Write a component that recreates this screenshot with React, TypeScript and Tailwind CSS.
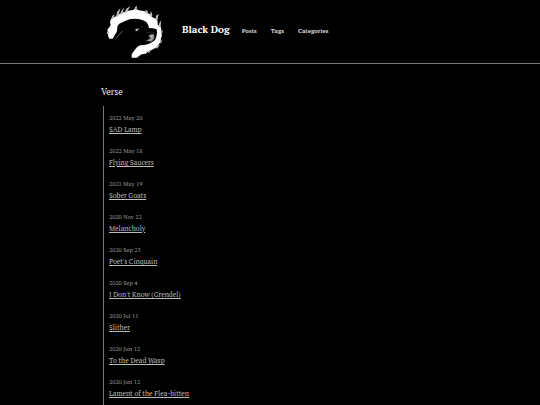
interface Post {
  date: string;
  title: string;
}

const navItems = ["Posts", "Tags", "Categories"];

const posts: Post[] = [
  { date: "2022 May 20", title: "SAD Lamp" },
  { date: "2022 May 18", title: "Flying Saucers" },
  { date: "2021 May 19", title: "Sober Goats" },
  { date: "2020 Nov 22", title: "Melancholy" },
  { date: "2020 Sep 25", title: "Poet's Cinquain" },
  { date: "2020 Sep 4", title: "I Don't Know (Grendel)" },
  { date: "2020 Jul 11", title: "Slither" },
  { date: "2020 Jun 12", title: "To the Dead Wasp" },
  { date: "2020 Jun 12", title: "Lament of the Flea-bitten" },
];

function DogLogo() {
  return (
    <svg viewBox="0 0 180 171" className="h-[57px] w-[60px]" aria-hidden="true">
      {/* burning mane around the head */}
      <path
        fill="#fff"
        d="M13 107 L9 98 L10 88 L7 80 L13 73 L17 66 L15 58 L18 47 L29 42 L37 37 L48 31 L58 27 L70 23 L84 21 L90 17 L98 20 L108 23 L118 24 L126 29 L135 34 L140 41 L147 45 L155 48 L158 58 L158 66 L166 69 L169 77 L168 88 L171 97 L168 106 L166 117 L159 128 L150 136 L140 141 L130 145 L122 152 L110 154 L103 158 L96 164 L80 164 L80 154 L89 141 L97 131 L106 127 L118 126 L130 123 L141 118 L150 111 L154 101 L156 90 L155 79 L143 76 L132 75 L130 67 L124 57 L114 52 L104 49 L92 47 L76 48 L62 53 L52 58 L43 62 L38 68 L36 78 L36 85 L30 95 L23 107 Z"
      />
      {/* loose flames */}
      <path
        fill="#bbb"
        d="M18 50 L22 38 L29 34 L26 46 Z M33 42 L36 28 L46 15 L43 29 L40 40 Z M44 36 L49 24 L57 13 L54 27 L50 35 Z M58 30 L64 17 L76 9 L70 20 L66 28 Z M88 21 L90 12 L96 8 L95 22 Z M121 29 L122 19 L129 27 L130 35 Z M134 37 L138 25 L142 34 L141 43 Z M151 50 L153 38 L161 33 L158 47 L157 56 Z M160 70 L163 59 L169 52 L167 66 L168 76 Z M166 86 L173 80 L171 94 Z M164 116 L172 109 L168 122 Z M150 133 L165 125 L156 137 Z M126 145 L140 139 L132 150 Z M8 82 L5 91 L10 95 Z"
      />
      <path fill="none" stroke="#999" strokeWidth="2" d="M34 104 L42 96 L53 84" />
      {/* eye */}
      <path fill="#ccc" d="M90 81 L94 77 L97 78 L102 75 L99 82 L94 84 Z" />
      <path fill="none" stroke="#555" strokeWidth="1" d="M88 87 L101 86 M106 71 L114 74" />
      {/* jaw */}
      <path fill="#777" d="M130 98 L137 94 L146 92 L149 101 L146 110 L139 116 L128 114 L117 116 L130 110 L135 104 Z" />
      <path fill="none" stroke="#ddd" strokeWidth="2" d="M134 101 L142 97 L139 104 L146 100 M129 111 L137 112 L144 106" />
      <path fill="none" stroke="#555" strokeWidth="1" d="M122 87 L135 89 L149 88" />
    </svg>
  );
}

function Header() {
  return (
    <header className="border-b border-[#777]">
      <div className="mx-auto flex max-w-[338px] items-center px-1 py-[3px]">
        <a href="#" aria-label="Home">
          <DogLogo />
        </a>
        <div className="ml-[17px] flex items-baseline pb-[2px]">
          <a href="#" className="text-[10px] leading-4 font-bold text-white">
            Black Dog
          </a>
          <nav className="ml-3 flex gap-[14px]">
            {navItems.map((item) => (
              <a key={item} href="#" className="text-[6px] leading-4 font-bold text-[#ddd]">
                {item}
              </a>
            ))}
          </nav>
        </div>
      </div>
    </header>
  );
}

export default function App() {
  return (
    <div className="h-screen overflow-hidden bg-black font-['PT_Serif','Liberation_Serif',serif] text-[#ccc]">
      <Header />
      <main className="mx-auto max-w-[338px] pt-[21px]">
        <h1 className="text-[9px] leading-[14px] text-[#eee]">Verse</h1>
        <ul className="mt-[7px] ml-[2px] border-l border-[#777] pt-[7px] pb-8 pl-[5px]">
          {posts.map((post) => (
            <li key={post.title} className="mb-[11px]">
              <div className="text-[6px] leading-[11px] text-[#999]">{post.date}</div>
              <a href="#" className="block text-[7px] leading-[11px] text-[#bbb] underline">
                {post.title}
              </a>
            </li>
          ))}
        </ul>
      </main>
    </div>
  );
}
